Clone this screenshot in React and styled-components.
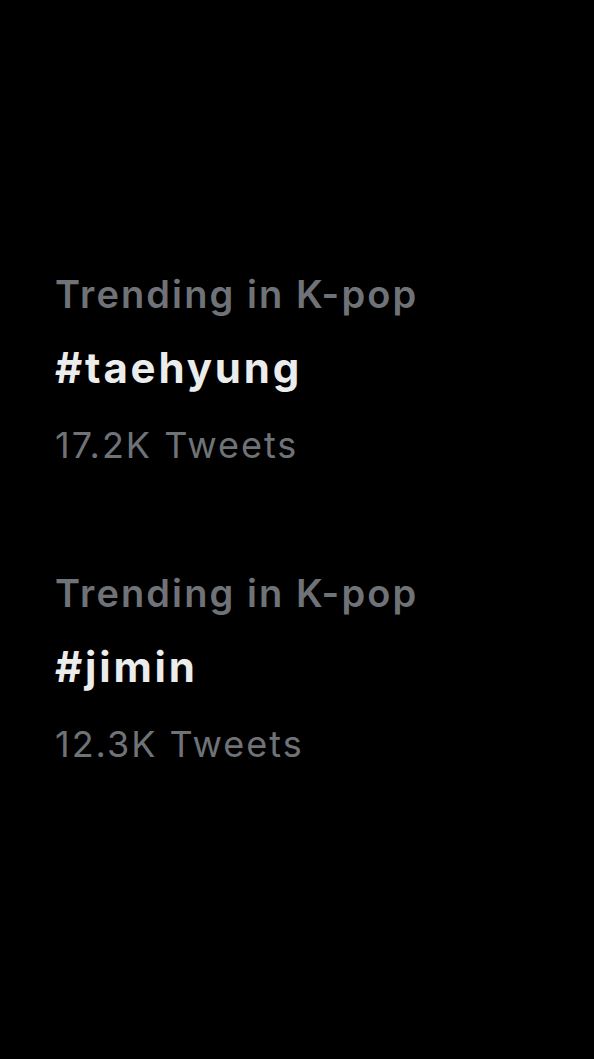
import React from 'react';
import styled, { createGlobalStyle } from 'styled-components';

const GlobalStyle = createGlobalStyle`
    html, body {
        margin: 0;
        padding: 0;
        background: #000;
    }
`;

const Screen = styled.div`
    min-height: 100vh;
    background: #000;
    display: flex;
    flex-direction: column;
    gap: 103px;
    padding: 271px 0 0 55px;
    box-sizing: border-box;
    font-family: Inter, 'Noto Sans', sans-serif;
`;

const Trend = styled.div`
    display: flex;
    flex-direction: column;
`;

const Context = styled.div`
    color: #6f7377;
    font-size: 38px;
    font-weight: 600;
    line-height: 46px;
    letter-spacing: 2.1px;
`;

const Tag = styled.div`
    color: #ebecec;
    font-size: 42px;
    font-weight: 700;
    line-height: 50px;
    margin-top: 26px;
    letter-spacing: 2.8px;
`;

const Count = styled.div`
    color: #6f7377;
    font-size: 36px;
    font-weight: 400;
    line-height: 44px;
    margin-top: 30px;
    letter-spacing: 2px;
`;

const trends = [
    { context: 'Trending in K-pop', tag: '#taehyung', count: '17.2K Tweets' },
    { context: 'Trending in K-pop', tag: '#jimin', count: '12.3K Tweets' },
];

function App() {
    return (
        <>
            <GlobalStyle />
            <Screen>
                {trends.map((t, i) => (
                    <Trend key={i}>
                        <Context>{t.context}</Context>
                        <Tag>{t.tag}</Tag>
                        <Count>{t.count}</Count>
                    </Trend>
                ))}
            </Screen>
        </>
    );
}

export default App;
